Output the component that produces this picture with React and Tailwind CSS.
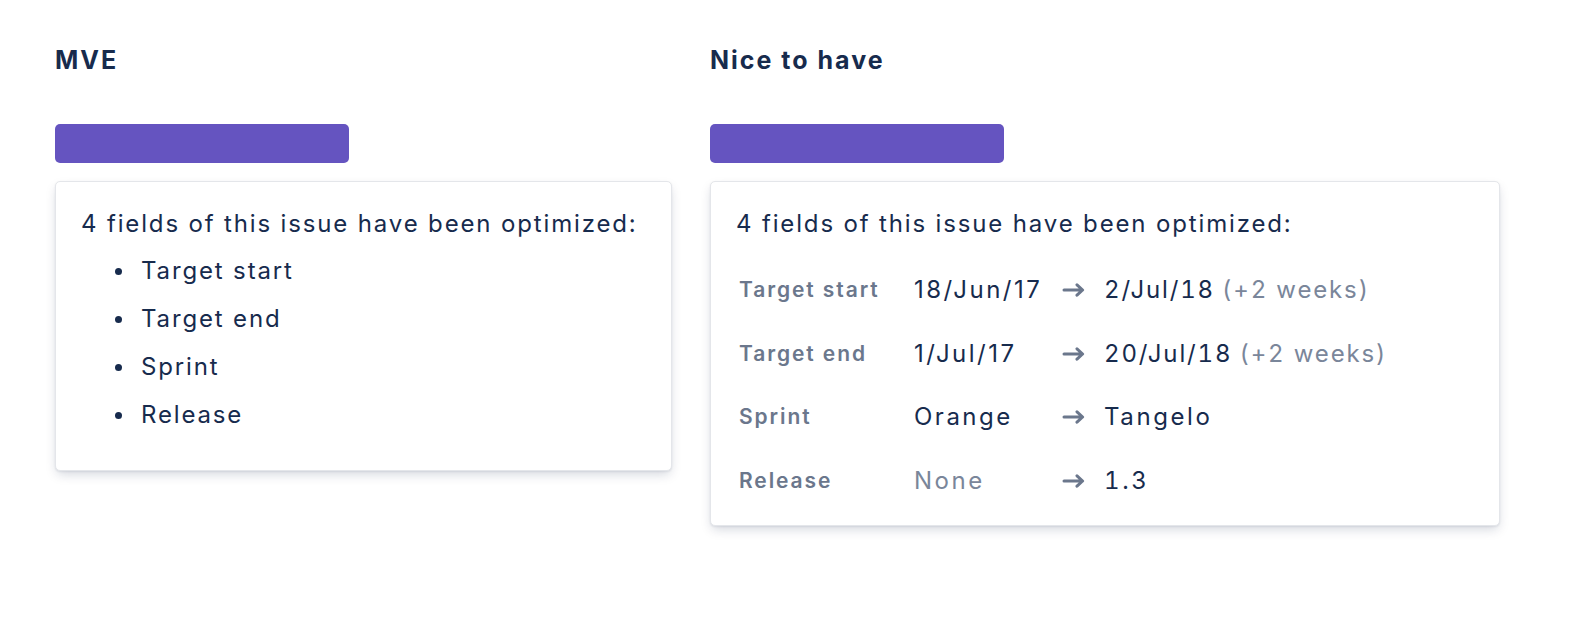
import React from "react";

const rows = [
  { label: "Target start", from: "18/Jun/17", to: "2/Jul/18", note: "(+2 weeks)" },
  { label: "Target end", from: "1/Jul/17", to: "20/Jul/18", note: "(+2 weeks)" },
  { label: "Sprint", from: "Orange", to: "Tangelo" },
  { label: "Release", from: "None", to: "1.3", muted: true },
];

const cardClass =
  "bg-white rounded-[5px] border border-[#e4e6ea] shadow-[0_5px_12px_-2px_rgba(9,30,66,0.18),0_1px_2px_rgba(9,30,66,0.08)]";

const body = "text-[24px] leading-[36px] tracking-[1.85px]";

const Arrow = () => (
  <svg width="24" height="14" viewBox="0 0 24 14" fill="none" className="block">
    <path
      d="M2 7H20.5M15 1.8L20.6 7L15 12.2"
      stroke="#6b778c"
      strokeWidth="3"
      strokeLinecap="round"
      strokeLinejoin="round"
    />
  </svg>
);

const Column = ({ title, width, children }) => (
  <div className={`flex flex-col ${width}`}>
    <h2 className="text-[25px] leading-[36px] font-bold tracking-[2px] text-[#172b4d]">{title}</h2>
    <div className="mt-[46px] h-[39px] w-[294px] rounded-[5px] bg-[#6554c0]" />
    <div className={`mt-[18px] ${cardClass}`}>{children}</div>
  </div>
);

const App = () => {
  return (
    <div
      className="h-[620px] w-full bg-white pl-[55px] pt-[42px] flex gap-[38px] text-[#172b4d]"
      style={{ fontFamily: "Inter, 'Noto Sans', sans-serif" }}
    >
      {/* MVE */}
      <Column title="MVE" width="w-[617px]">
        <div className="pl-[25px] pt-[24px] pb-[31px]">
          <p className={body}>4 fields of this issue have been optimized:</p>
          <ul className="mt-[5px]">
            {rows.map((r) => (
              <li key={r.label} className={`flex items-center h-[48px] ${body}`}>
                <span className="ml-[34px] mr-[19px] h-[7px] w-[7px] rounded-full bg-[#172b4d]" />
                {r.label}
              </li>
            ))}
          </ul>
        </div>
      </Column>

      {/* Nice to have */}
      <Column title="Nice to have" width="w-[790px]">
        <div className="pl-[25px] pt-[24px] pb-[26px]">
          <p className={body}>4 fields of this issue have been optimized:</p>
          <div className="mt-[30px] grid grid-cols-[178px_148px_42px_1fr] gap-y-[27.5px] items-center">
            {rows.map((r) => (
              <React.Fragment key={r.label}>
                <div className="ml-[3px] text-[21px] leading-[36px] font-semibold tracking-[1.9px] text-[#6b778c]">
                  {r.label}
                </div>
                <div
                  className={`text-[24px] leading-[36px] tracking-[2.5px] ${
                    r.muted ? "text-[#7a869a]" : "text-[#172b4d]"
                  }`}
                >
                  {r.from}
                </div>
                <div className="flex items-center h-[36px]">
                  <Arrow />
                </div>
                <div className={`${body} tabular-nums`}>
                  {r.note ? r.to : <span className="tracking-[2.6px]">{r.to}</span>}
                  {r.note && <span className="ml-[7px] text-[#7a869a]">{r.note}</span>}
                </div>
              </React.Fragment>
            ))}
          </div>
        </div>
      </Column>
    </div>
  );
};

export default App;
